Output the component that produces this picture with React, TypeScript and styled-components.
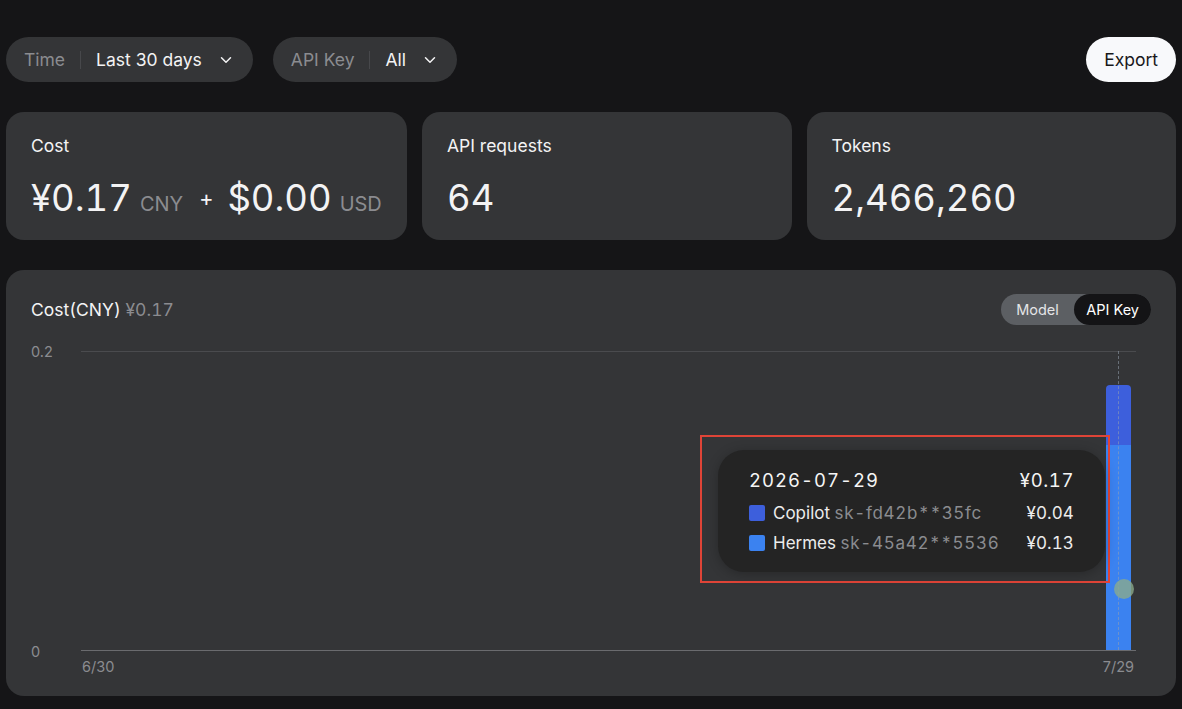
import React from 'react';
import styled, { createGlobalStyle } from 'styled-components';
import { ChevronDown } from 'lucide-react';

const colors = {
  page: '#151517',
  card: '#343537',
  text: '#f3f3f4',
  muted: '#8b8c90',
  line: '#4a4b4e',
  axis: '#6a6b6e',
  darkBlue: '#3d5fdc',
  blue: '#3b82f0',
};

const GlobalStyle = createGlobalStyle`
  html, body {
    margin: 0;
    background: ${colors.page};
    font-family: Inter, "Noto Sans", sans-serif;
    color: ${colors.text};
  }
  * { box-sizing: border-box; }
`;

type Series = { name: string; key: string; value: string; color: string };

const series: Series[] = [
  { name: 'Copilot', key: 'sk-fd42b**35fc', value: '¥0.04', color: colors.darkBlue },
  { name: 'Hermes', key: 'sk-45a42**5536', value: '¥0.13', color: colors.blue },
];

const App: React.FC = () => {
  return (
    <Page>
      <GlobalStyle />
      <Toolbar>
        <Filter>
          <FilterLabel>Time</FilterLabel>
          <FilterDivider />
          <FilterValue>Last 30 days</FilterValue>
          <ChevronDown size={18} strokeWidth={2} />
        </Filter>
        <Filter>
          <FilterLabel>API Key</FilterLabel>
          <FilterDivider />
          <FilterValue>All</FilterValue>
          <ChevronDown size={18} strokeWidth={2} />
        </Filter>
        <Spacer />
        <ExportButton>Export</ExportButton>
      </Toolbar>

      <Stats>
        <StatCard>
          <StatLabel>Cost</StatLabel>
          <StatValue>
            ¥0.17<Unit>CNY</Unit>
            <Plus>+</Plus>
            $0.00<Unit>USD</Unit>
          </StatValue>
        </StatCard>
        <StatCard>
          <StatLabel>API requests</StatLabel>
          <StatValue>64</StatValue>
        </StatCard>
        <StatCard>
          <StatLabel>Tokens</StatLabel>
          <StatValue>2,466,260</StatValue>
        </StatCard>
      </Stats>

      <ChartPanel>
        <ChartHeader>
          <ChartTitle>
            Cost(CNY) <TitleMuted>¥0.17</TitleMuted>
          </ChartTitle>
          <Toggle>
            <ToggleItem>Model</ToggleItem>
            <ToggleItem $active>API Key</ToggleItem>
          </Toggle>
        </ChartHeader>

        <ChartBody>
          <YAxis>
            <YTick>0.2</YTick>
            <YTick>0</YTick>
          </YAxis>
          <PlotColumn>
            <Plot>
              <GridLine />
              <Bar>
                <BarSegment $color={colors.darkBlue} style={{ height: 60 }} />
                <BarSegment $color={colors.blue} style={{ flex: 1 }} />
              </Bar>
              <Crosshair />
              <Dot />
              <Highlight />
              <Tooltip>
                <TooltipHead>
                  <span>2026-07-29</span>
                  <span>¥0.17</span>
                </TooltipHead>
                {series.map((s) => (
                  <TooltipRow key={s.key}>
                    <Swatch $color={s.color} />
                    <RowName>
                      {s.name} <RowKey>{s.key}</RowKey>
                    </RowName>
                    <RowValue>{s.value}</RowValue>
                  </TooltipRow>
                ))}
              </Tooltip>
            </Plot>
            <XAxis>
              <span>6/30</span>
              <span>7/29</span>
            </XAxis>
          </PlotColumn>
        </ChartBody>
      </ChartPanel>
    </Page>
  );
};

export default App;

const Page = styled.div`
  padding: 37px 6px 13px;
  display: flex;
  flex-direction: column;
`;

const Toolbar = styled.div`
  display: flex;
  align-items: center;
  gap: 20px;
  height: 45px;
`;

const Filter = styled.div`
  height: 45px;
  display: flex;
  align-items: center;
  padding: 0 18px 0 18px;
  border-radius: 23px;
  background: ${colors.card};
  font-size: 17.5px;
  color: ${colors.text};
  svg {
    margin-left: 15px;
    color: ${colors.text};
  }
`;

const FilterLabel = styled.span`
  color: ${colors.muted};
`;

const FilterDivider = styled.span`
  width: 1px;
  height: 18px;
  background: #47484b;
  margin: 0 15px;
`;

const FilterValue = styled.span`
  color: ${colors.text};
`;

const Spacer = styled.div`
  flex: 1;
`;

const ExportButton = styled.button`
  height: 45px;
  padding: 0 18px;
  border: none;
  border-radius: 23px;
  background: #f8f9fb;
  color: #18181a;
  font-family: inherit;
  font-size: 17.5px;
`;

const Stats = styled.div`
  margin-top: 30px;
  display: grid;
  grid-template-columns: 401px 1fr 1fr;
  gap: 15px;
`;

const StatCard = styled.div`
  height: 128px;
  border-radius: 18px;
  background: ${colors.card};
  padding: 22px 25px 0;
  display: flex;
  flex-direction: column;
`;

const StatLabel = styled.div`
  font-size: 17.5px;
  line-height: 24px;
  color: ${colors.text};
`;

const StatValue = styled.div`
  margin-top: 17px;
  font-size: 36.5px;
  line-height: 46px;
  color: ${colors.text};
  white-space: nowrap;
  font-variant-numeric: tabular-nums;
`;

const Unit = styled.span`
  font-size: 20px;
  color: ${colors.muted};
  margin-left: 8px;
`;

const Plus = styled.span`
  font-size: 22px;
  margin: 0 14px 0 16px;
  position: relative;
  top: -5px;
`;

const ChartPanel = styled.div`
  margin-top: 30px;
  height: 426px;
  border-radius: 18px;
  background: ${colors.card};
  padding: 24px 25px 0;
`;

const ChartHeader = styled.div`
  display: flex;
  align-items: center;
  justify-content: space-between;
  height: 31px;
`;

const ChartTitle = styled.div`
  font-size: 17.5px;
  color: ${colors.text};
  font-variant-numeric: tabular-nums;
`;

const TitleMuted = styled.span`
  color: ${colors.muted};
`;

const Toggle = styled.div`
  display: flex;
  height: 31px;
  border-radius: 16px;
  background: #5c5f63;
`;

const ToggleItem = styled.div<{ $active?: boolean }>`
  display: flex;
  align-items: center;
  padding: 0 ${(p) => (p.$active ? 12 : 15.5)}px;
  border-radius: 16px;
  font-size: 14.5px;
  color: ${(p) => (p.$active ? '#fff' : '#e4e5e7')};
  background: ${(p) => (p.$active ? '#141416' : 'transparent')};
`;

const ChartBody = styled.div`
  display: flex;
  margin-top: 26px;
  padding-right: 15px;
`;

const YAxis = styled.div`
  width: 50px;
  display: flex;
  flex-direction: column;
  justify-content: space-between;
  margin-top: -7px;
  height: 316px;
`;

const YTick = styled.span`
  font-size: 14.5px;
  line-height: 16px;
  color: ${colors.muted};
`;

const PlotColumn = styled.div`
  flex: 1;
  display: flex;
  flex-direction: column;
`;

const Plot = styled.div`
  position: relative;
  height: 300px;
  border-bottom: 1px solid ${colors.axis};
`;

const GridLine = styled.div`
  height: 1px;
  background: ${colors.line};
`;

const Bar = styled.div`
  position: absolute;
  left: 1025px;
  bottom: 0;
  width: 25px;
  height: 265px;
  display: flex;
  flex-direction: column;
  border-radius: 4px 4px 0 0;
  overflow: hidden;
`;

const BarSegment = styled.div<{ $color: string }>`
  background: ${(p) => p.$color};
`;

const Crosshair = styled.div`
  position: absolute;
  left: 1037px;
  top: 0;
  bottom: 0;
  border-left: 1px dashed rgba(150, 160, 175, 0.55);
`;

const Dot = styled.div`
  position: absolute;
  left: 1033px;
  top: 228px;
  width: 20px;
  height: 20px;
  border-radius: 50%;
  background: rgba(140, 172, 138, 0.78);
`;

const Highlight = styled.div`
  position: absolute;
  left: 619px;
  top: 84px;
  width: 410px;
  height: 148px;
  border: 2px solid #df4437;
`;

const Tooltip = styled.div`
  position: absolute;
  left: 637px;
  top: 99px;
  width: 387px;
  height: 122px;
  border-radius: 26px;
  background: #242424;
  padding: 17px 31px 0;
  box-shadow: 0 2px 12px rgba(0, 0, 0, 0.25);
  font-variant-numeric: tabular-nums;
`;

const TooltipHead = styled.div`
  display: flex;
  justify-content: space-between;
  font-size: 18.5px;
  line-height: 26px;
  letter-spacing: 1px;
  color: #f5f5f5;
  margin-bottom: 5px;
  span:last-child {
    letter-spacing: 0.6px;
  }
`;

const TooltipRow = styled.div`
  display: flex;
  align-items: center;
  height: 30px;
  font-size: 17px;
  color: #ececec;
`;

const Swatch = styled.span<{ $color: string }>`
  width: 16px;
  height: 16px;
  border-radius: 2px;
  background: ${(p) => p.$color};
  margin-right: 8px;
`;

const RowName = styled.span`
  flex: 1;
  white-space: nowrap;
`;

const RowKey = styled.span`
  color: ${colors.muted};
  letter-spacing: 0.7px;
`;

const RowValue = styled.span`
  white-space: nowrap;
  letter-spacing: 0.1px;
`;

const XAxis = styled.div`
  display: flex;
  justify-content: space-between;
  padding: 7px 2px 0 1px;
  font-size: 14.5px;
  line-height: 18px;
  color: ${colors.muted};
`;
